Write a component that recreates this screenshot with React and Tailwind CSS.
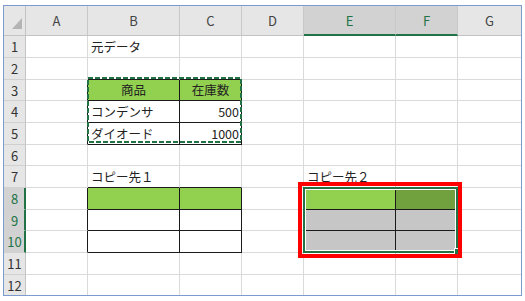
import React from 'react';

// Column layout (A..G), widths include the right grid line
const COLS = [
  { key: 'A', w: 'w-[62px]' },
  { key: 'B', w: 'w-[92px]' },
  { key: 'C', w: 'w-[62px]' },
  { key: 'D', w: 'w-[62px]' },
  { key: 'E', w: 'w-[92px]', sel: true },
  { key: 'F', w: 'w-[62px]', sel: true },
  { key: 'G', w: 'flex-1', last: true },
];

const ROWS = [
  'h-[22px]', 'h-[22px]', 'h-[21px]', 'h-[22px]', 'h-[22px]', 'h-[21px]',
  'h-[22px]', 'h-[22px]', 'h-[21px]', 'h-[22px]', 'h-[22px]', 'h-[20px]',
];

const SEL_ROWS = [8, 9, 10];

const FILLS = {
  green: 'bg-[#92d050]',
  greenSel: 'bg-[#71a03e]',
  sel: 'bg-[#c6c6c6]',
};

const CELLS = {
  B1: { text: '元データ' },
  B3: { text: '商品', align: 'center', fill: 'green' },
  C3: { text: '在庫数', align: 'center', fill: 'green' },
  B4: { text: 'コンデンサ' },
  C4: { text: '500', align: 'right' },
  B5: { text: 'ダイオード' },
  C5: { text: '1000', align: 'right' },
  B7: { text: 'コピー先１' },
  B8: { fill: 'green' },
  C8: { fill: 'green' },
  E7: { text: 'コピー先２' },
  E8: { fill: 'green' },
  F8: { fill: 'greenSel' },
  E9: { fill: 'sel' },
  F9: { fill: 'sel' },
  E10: { fill: 'sel' },
  F10: { fill: 'sel' },
};

// ranges with thin black borders
const BOXES = [
  { c0: 1, c1: 2, r0: 3, r1: 5 },
  { c0: 1, c1: 2, r0: 8, r1: 10 },
  { c0: 4, c1: 5, r0: 8, r1: 10 },
];

const blackRight = (c, r) =>
  BOXES.some((b) => r >= b.r0 && r <= b.r1 && c >= b.c0 - 1 && c <= b.c1);
const blackBottom = (c, r) =>
  BOXES.some((b) => c >= b.c0 && c <= b.c1 && r >= b.r0 - 1 && r <= b.r1);

function Cell({ col, c, r, lastRow }) {
  const data = CELLS[col.key + r] || {};
  const align =
    data.align === 'center' ? 'justify-center' : data.align === 'right' ? 'justify-end pr-[2px]' : 'justify-start pl-[3px]';
  const right = col.last ? '' : blackRight(c, r) ? 'border-r border-r-[#1a1a1a]' : 'border-r border-r-[#dadada]';
  const bottom = lastRow ? '' : blackBottom(c, r) ? 'border-b border-b-[#1a1a1a]' : 'border-b border-b-[#dadada]';
  return (
    <div
      className={`${col.w} shrink-0 h-full flex items-center pt-[1px] overflow-visible whitespace-nowrap ${align} ${right} ${bottom} ${
        data.fill ? FILLS[data.fill] : ''
      }`}
    >
      {data.text}
    </div>
  );
}

export default function App() {
  return (
    <div className="w-[525px] h-[301px] bg-white pl-[3px] pt-[5px] font-['Noto_Sans_CJK_JP','Noto_Sans',sans-serif] text-[12.5px] text-[#222]">
      <div className="relative w-[519px] h-[291px] border border-[#7d9bce] flex flex-col overflow-hidden">
        {/* Column headers */}
        <div className="flex h-[30px] shrink-0 text-[13px] text-[#444]">
          <div className="w-[22px] shrink-0 bg-[#e6e6e6] border-r border-b border-[#c3c3c3] relative">
            <svg className="absolute left-0 top-0" width="21" height="29" viewBox="0 0 21 29">
              <polygon points="18,12 18,23 8,23" fill="#b4b4b4" />
            </svg>
          </div>
          {COLS.map((col) => (
            <div
              key={col.key}
              className={`${col.w} shrink-0 flex items-center justify-center ${
                col.last ? '' : 'border-r border-r-[#c8c8c8]'
              } ${
                col.sel
                  ? 'bg-[#d2d2d2] border-b-2 border-b-[#217346] text-[#217346] pt-[2px]'
                  : 'bg-[#e6e6e6] border-b border-b-[#c3c3c3]'
              }`}
            >
              {col.key}
            </div>
          ))}
        </div>

        {/* Rows */}
        {ROWS.map((h, i) => {
          const r = i + 1;
          const lastRow = r === ROWS.length;
          const sel = SEL_ROWS.includes(r);
          return (
            <div key={r} className={`flex shrink-0 ${h}`}>
              <div
                className={`w-[22px] shrink-0 h-full flex items-center justify-center pt-[1px] text-[13px] ${
                  lastRow ? '' : 'border-b border-b-[#d0d0d0]'
                } ${
                  sel
                    ? 'bg-[#d2d2d2] border-r-2 border-r-[#217346] text-[#217346] pl-[1px]'
                    : 'bg-[#e6e6e6] border-r border-r-[#c3c3c3] text-[#333]'
                }`}
              >
                {r}
              </div>
              {COLS.map((col, c) => (
                <Cell key={col.key} col={col} c={c} r={r} lastRow={lastRow} />
              ))}
            </div>
          );
        })}

        {/* Copy marquee around B3:C5 */}
        <svg className="absolute left-[82px] top-[70px] pointer-events-none" width="157" height="68" viewBox="0 0 157 68">
          <rect x="2" y="2" width="153" height="64" fill="none" stroke="#217346" strokeWidth="2" strokeDasharray="5 2" />
        </svg>

        {/* Selection E8:F10 */}
        <div className="absolute left-[299px] top-[181px] w-[155px] h-[66px] border-2 border-[#217346] shadow-[inset_0_0_0_1px_#ffffff] pointer-events-none" />
        <div className="absolute left-[450px] top-[242px] w-[6px] h-[6px] bg-[#217346] border-l border-t border-white" />

        {/* Red highlight */}
        <div className="absolute left-[294px] top-[176px] w-[164px] h-[76px] border-4 border-[#ff0000] pointer-events-none" />
      </div>
    </div>
  );
}
